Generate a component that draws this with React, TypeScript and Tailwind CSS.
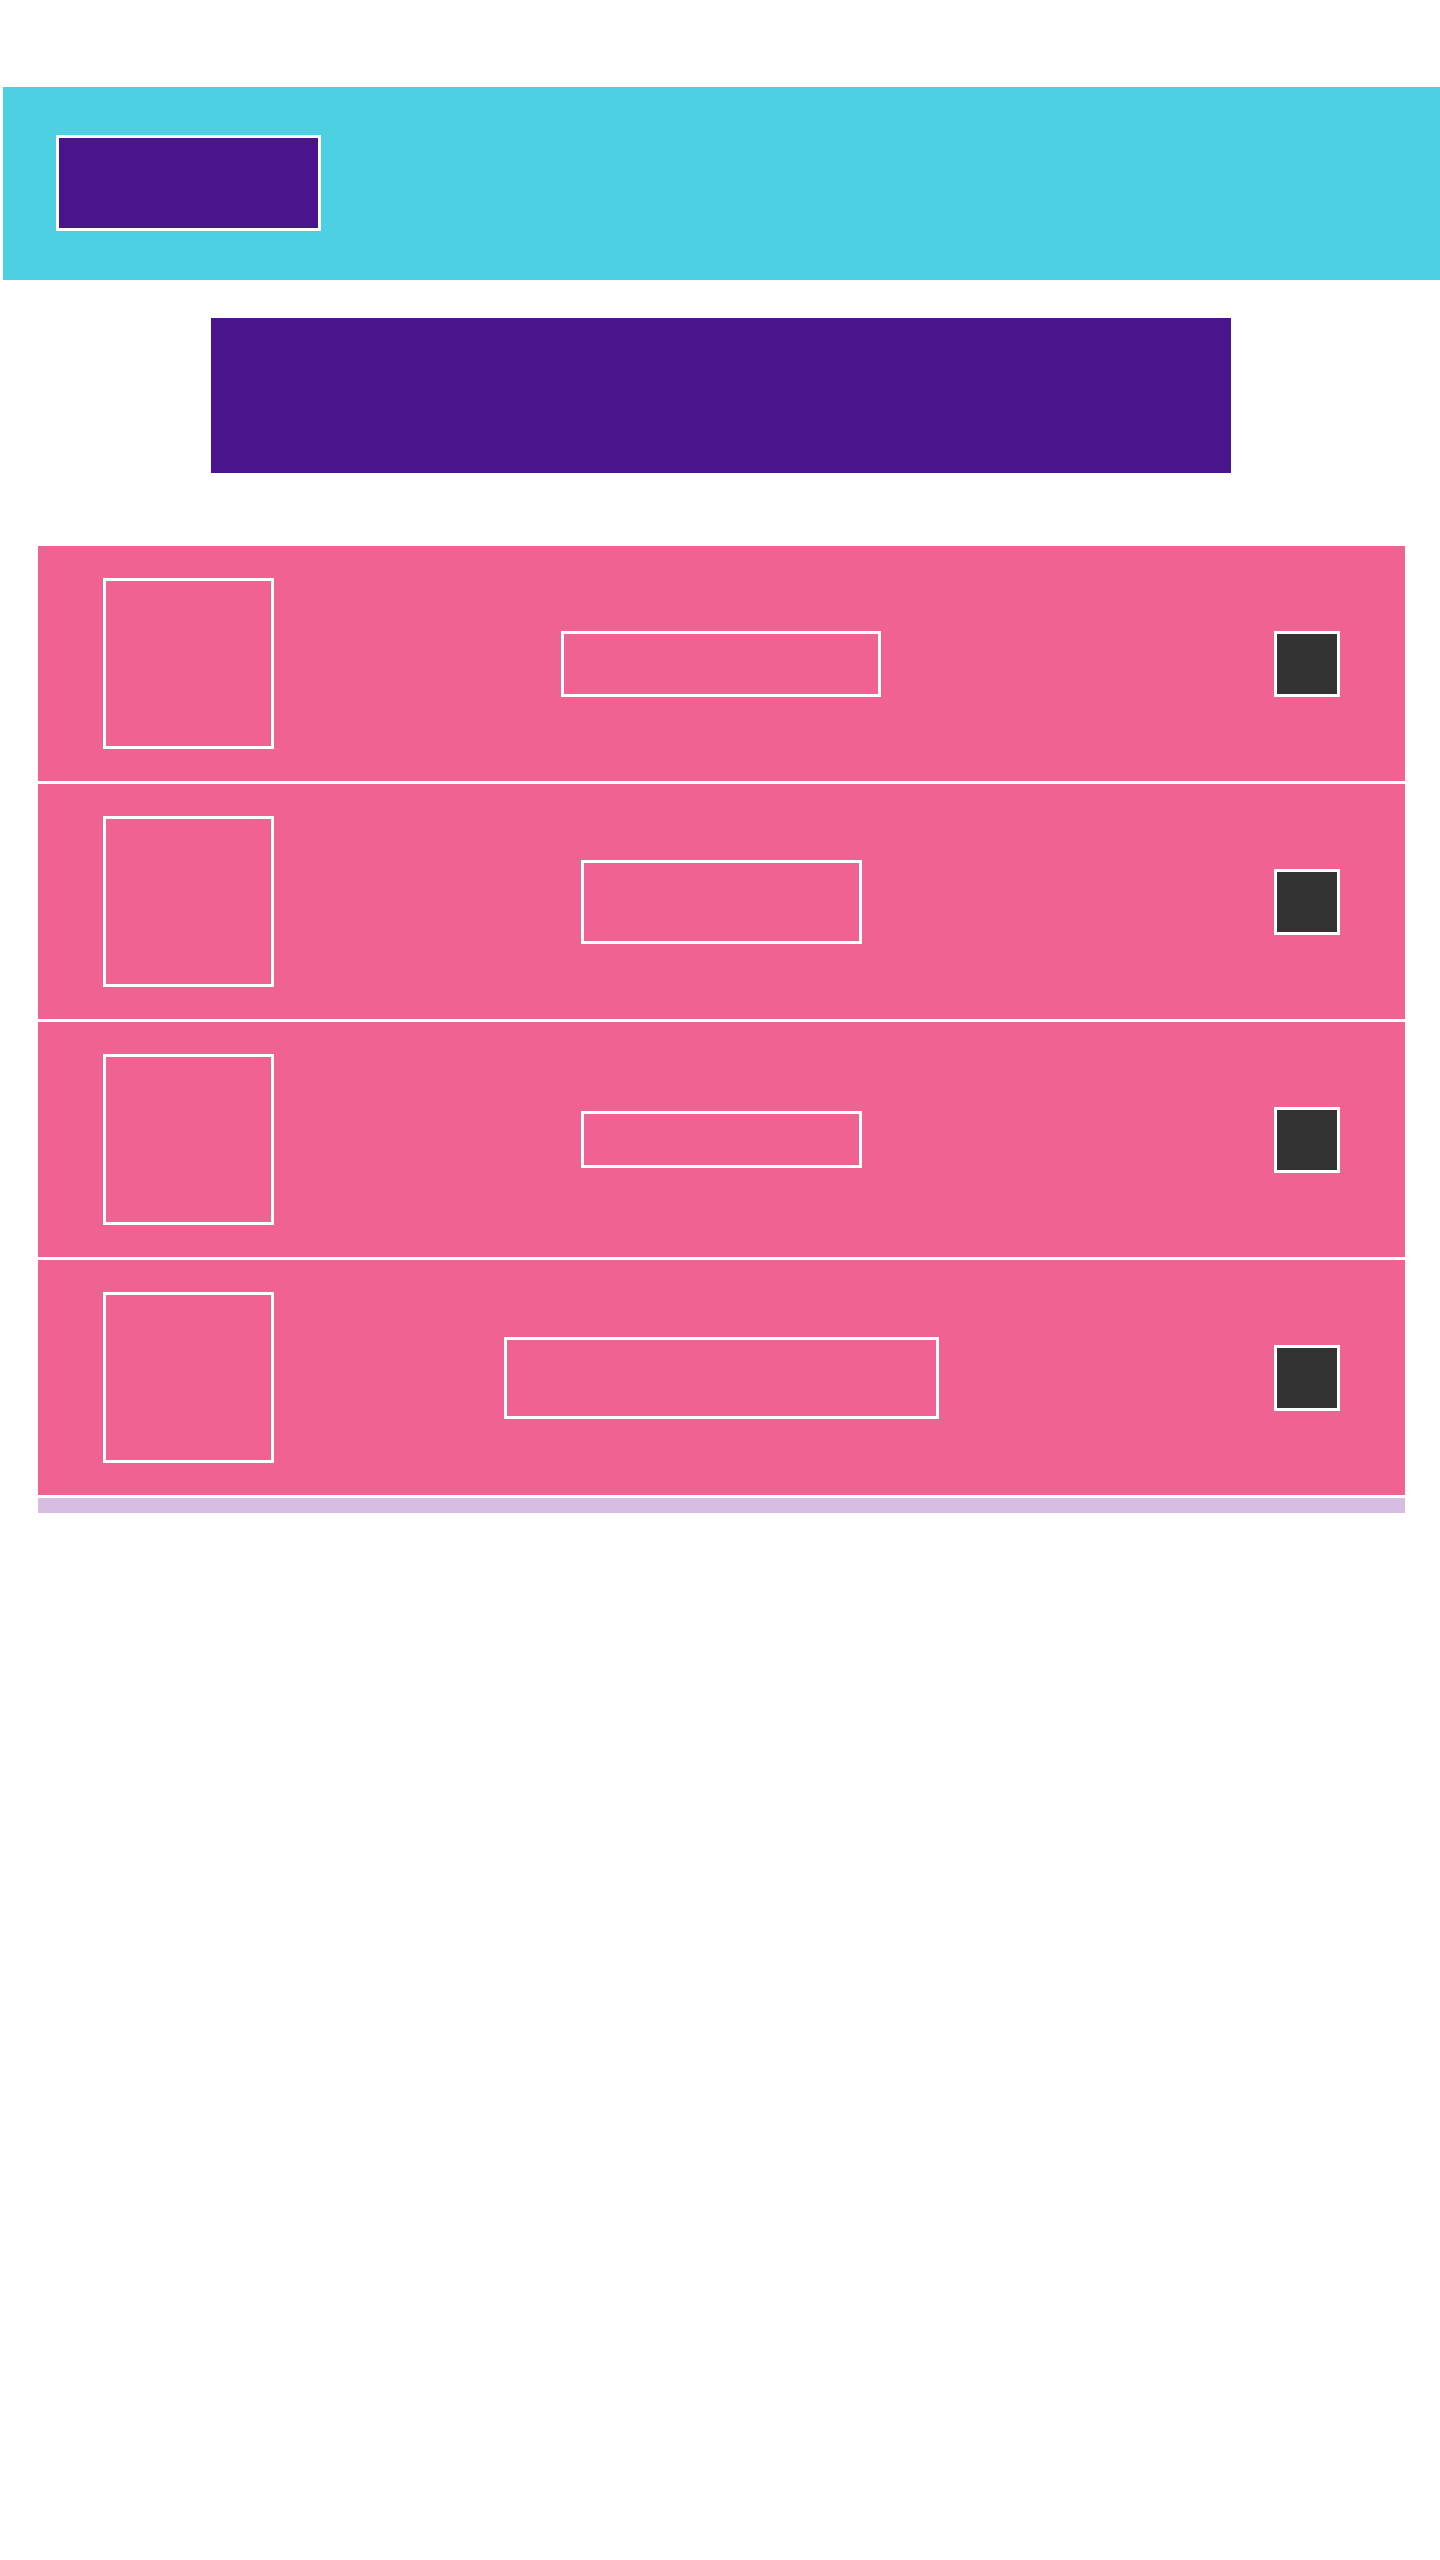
// sizes of the outlined title placeholder in each row
const rows = ["w-[320px] h-[66px]", "w-[281px] h-[84px]", "w-[281px] h-[57px]", "w-[435px] h-[82px]"];

function Row({ box }: { box: string }) {
  return (
    <div className="grid grid-cols-3 items-center px-[65px] py-[32px] border-b-[3px] border-white">
      {/* thumbnail placeholder */}
      <div className="justify-self-start w-[171px] h-[171px] border-[3px] border-white" />
      {/* title placeholder */}
      <div className={`justify-self-center border-[3px] border-white ${box}`} />
      {/* check box */}
      <div className="justify-self-end w-[66px] h-[66px] border-[3px] border-white bg-[#323232]" />
    </div>
  );
}

export default function App() {
  return (
    <div className="min-h-[2560px] bg-white" style={{ fontFamily: "Roboto, sans-serif" }}>
      {/* ── Top bar ── */}
      <header className="ml-[3px] mt-[87px] h-[193px] bg-[#4dd0e1] pl-[53px] pt-[48px]">
        <button className="block w-[265px] h-[96px] border-[3px] border-white bg-[#4a148c]" />
      </header>

      {/* ── Banner ── */}
      <div className="ml-[211px] mt-[38px] w-[1020px] h-[155px] bg-[#4a148c]" />

      {/* ── List ── */}
      <div className="ml-[38px] mt-[73px] w-[1367px]">
        <div className="bg-[#f06292]">
          {rows.map((box) => (
            <Row key={box} box={box} />
          ))}
        </div>
        <div className="h-[15px] bg-[#d7bde2]" />
      </div>
    </div>
  );
}
